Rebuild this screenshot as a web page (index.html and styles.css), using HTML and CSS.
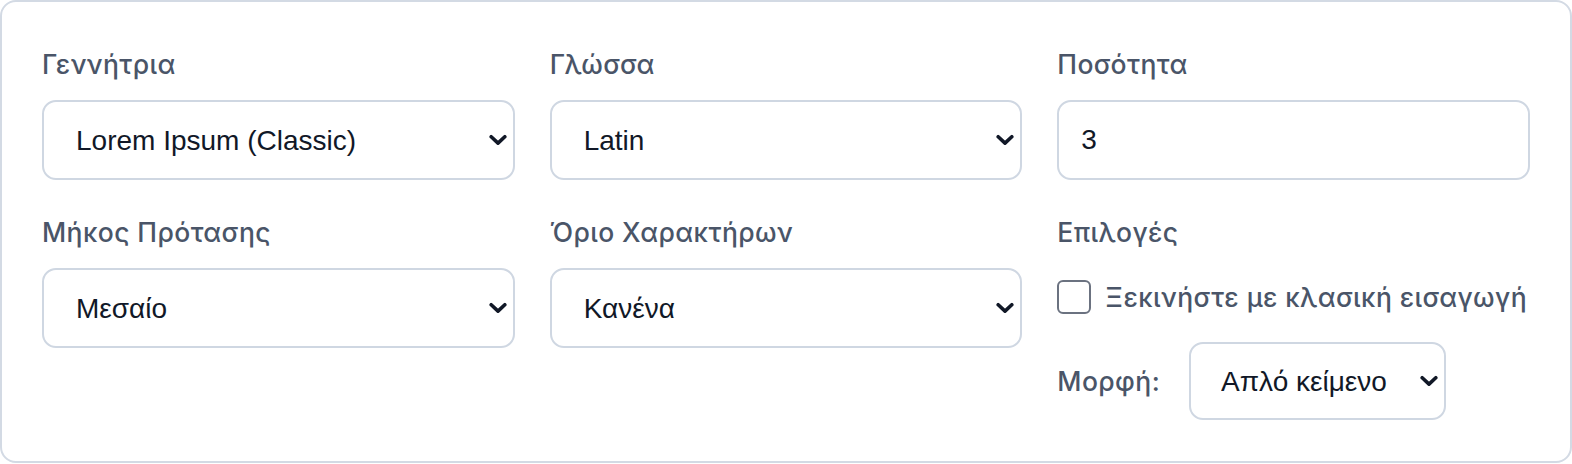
FILE: index.html
```html
<!DOCTYPE html>
<html lang="el">
<head>
<meta charset="utf-8">
<title>Γεννήτρια</title>
<link rel="stylesheet" href="styles.css">
</head>
<body>
<div class="card">
  <div class="grid">
    <div class="field">
      <label class="label">Γεννήτρια</label>
      <div class="select-wrap">
        <select class="select"><option>Lorem Ipsum (Classic)</option></select>
        <svg class="chev" viewBox="0 0 18 11" width="18" height="11"><polyline points="2.2,2.2 9,8.6 15.8,2.2"/></svg>
      </div>
    </div>
    <div class="field">
      <label class="label">Γλώσσα</label>
      <div class="select-wrap">
        <select class="select"><option>Latin</option></select>
        <svg class="chev" viewBox="0 0 18 11" width="18" height="11"><polyline points="2.2,2.2 9,8.6 15.8,2.2"/></svg>
      </div>
    </div>
    <div class="field">
      <label class="label">Ποσότητα</label>
      <input class="input" type="text" value="3">
    </div>
    <div class="field">
      <label class="label">Μήκος Πρότασης</label>
      <div class="select-wrap">
        <select class="select"><option>Μεσαίο</option></select>
        <svg class="chev" viewBox="0 0 18 11" width="18" height="11"><polyline points="2.2,2.2 9,8.6 15.8,2.2"/></svg>
      </div>
    </div>
    <div class="field">
      <label class="label">Όριο Χαρακτήρων</label>
      <div class="select-wrap">
        <select class="select"><option>Κανένα</option></select>
        <svg class="chev" viewBox="0 0 18 11" width="18" height="11"><polyline points="2.2,2.2 9,8.6 15.8,2.2"/></svg>
      </div>
    </div>
    <div class="field">
      <label class="label">Επιλογές</label>
      <label class="check-row">
        <input class="checkbox" type="checkbox">
        <span class="check-text">Ξεκινήστε με κλασική εισαγωγή</span>
      </label>
      <div class="format-row">
        <span class="format-label">Μορφή:</span>
        <div class="select-wrap small">
          <select class="select select-small"><option>Απλό κείμενο</option></select>
          <svg class="chev" viewBox="0 0 18 11" width="18" height="11"><polyline points="2.2,2.2 9,8.6 15.8,2.2"/></svg>
        </div>
      </div>
    </div>
  </div>
</div>
</body>
</html>
```

FILE: styles.css
```css
* { box-sizing: border-box; }
html, body { margin: 0; padding: 0; background: #ffffff; }
body { font-family: "Inter", "Noto Sans", sans-serif; }

.card {
  width: 1572px;
  border: 2px solid #d3dae4;
  border-radius: 16px;
  background: #ffffff;
  padding: 44px 40px 41px 40px;
}

.grid {
  display: grid;
  grid-template-columns: repeat(3, 1fr);
  column-gap: 35px;
  row-gap: 34px;
  align-items: start;
}

.field { display: flex; flex-direction: column; }

.label {
  font-size: 26.5px;
  font-weight: 500;
  letter-spacing: 0.4px;
  line-height: 37px;
  color: #4a5568;
  margin-bottom: 17px;
}

.select-wrap { position: relative; }

.select {
  appearance: none;
  -webkit-appearance: none;
  width: 100%;
  height: 80px;
  border: 2px solid #cfd7e2;
  border-radius: 14px;
  background: #ffffff;
  padding: 0 40px 0 32px;
  font-family: "Liberation Sans", Arial, sans-serif;
  font-size: 28px;
  color: #111827;
  outline: none;
}

.chev {
  position: absolute;
  right: 8px;
  top: 50%;
  transform: translateY(-50%);
  fill: none;
  stroke: #111827;
  stroke-width: 3.6;
  stroke-linecap: round;
  stroke-linejoin: round;
  pointer-events: none;
}

.input {
  width: 100%;
  height: 80px;
  border: 2px solid #cfd7e2;
  border-radius: 14px;
  background: #ffffff;
  padding: 0 22px;
  font-family: "Liberation Sans", Arial, sans-serif;
  font-size: 28px;
  color: #111827;
  outline: none;
}

.check-row {
  display: flex;
  align-items: center;
  gap: 14px;
  margin-top: 12px;
  height: 34px;
}

.checkbox {
  appearance: none;
  -webkit-appearance: none;
  margin: 0;
  width: 34px;
  height: 34px;
  border: 2px solid #6b7280;
  border-radius: 6px;
  background: #ffffff;
  flex: none;
}

.check-text {
  font-size: 26.5px;
  font-weight: 500;
  letter-spacing: 0.4px;
  color: #4a5568;
  white-space: nowrap;
}

.format-row {
  display: flex;
  align-items: center;
  gap: 29px;
  margin-top: 28px;
}

.format-label {
  font-size: 26.5px;
  font-weight: 500;
  letter-spacing: 0.4px;
  color: #4a5568;
}

.select-wrap.small { width: 257px; }

.select-small { height: 78px; padding-left: 30px; }
```
